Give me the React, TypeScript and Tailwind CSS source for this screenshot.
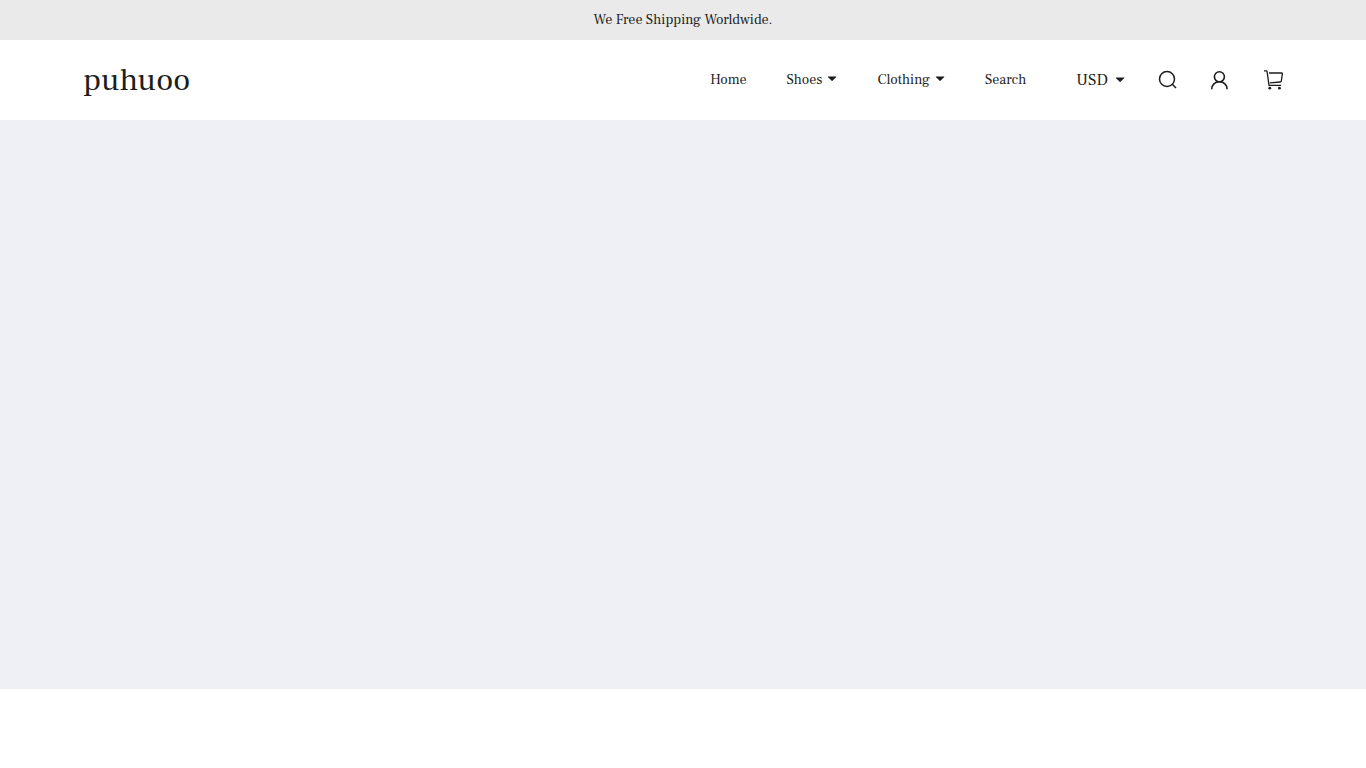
const navItems = [
  { label: "Home", hasMenu: false },
  { label: "Shoes", hasMenu: true },
  { label: "Clothing", hasMenu: true },
  { label: "Search", hasMenu: false },
];

function Caret({ className = "" }: { className?: string }) {
  return (
    <svg viewBox="0 0 10 6" className={`h-1.5 w-2.5 fill-current ${className}`}>
      <path d="M1.1.4H9c.4 0 .5.4.3.7L5.5 4.8a.6.6 0 0 1-.8 0L.8 1.1C.6.8.7.4 1.1.4z" />
    </svg>
  );
}

function SearchIcon() {
  return (
    <svg viewBox="0 0 20 20" className="size-5" fill="none" stroke="currentColor" strokeWidth="1.5">
      <circle cx="9" cy="9" r="7.5" />
      <path d="M14.3 14.3l3.7 3.8" />
    </svg>
  );
}

function UserIcon() {
  return (
    <svg viewBox="0 0 20 20" className="size-5" fill="none" stroke="currentColor" strokeWidth="1.6">
      <circle cx="9.4" cy="6.8" r="5" />
      <path d="M1.7 19.3c0-4.3 3.3-7.5 7.7-7.5s7.7 3.2 7.7 7.5" />
    </svg>
  );
}

function CartIcon() {
  return (
    <svg viewBox="0 0 20 20" className="size-5" fill="none" stroke="currentColor" strokeWidth="1.3" strokeLinejoin="round">
      <path d="M0 .9h2.4c.4 0 .6.3.7.7L5 15.4h12.1" />
      <path d="M5 3h12.7c.5 0 .8.4.7.9l-1.1 7.2c-.1.6-.5.9-1.1.9l-10.4.9" />
      <circle cx="5.8" cy="18.2" r="1.4" fill="currentColor" stroke="none" />
      <circle cx="15.4" cy="18.2" r="1.4" fill="currentColor" stroke="none" />
    </svg>
  );
}

export default function App() {
  return (
    <div className="min-h-screen bg-white font-['Frank_Ruhl_Libre','Noto_Serif',serif] text-[#1c1d1d]">
      {/* announcement */}
      <div className="flex h-10 items-center justify-center bg-[#eaeaea] text-sm">
        We Free Shipping Worldwide.
      </div>

      <header className="flex h-20 items-center justify-between pr-[82px] pl-[83px]">
        <a href="#" className="text-[32px] leading-10">puhuoo</a>

        <div className="flex items-center">
          <nav className="flex items-center gap-10 text-sm">
            {navItems.map((item) => (
              <a key={item.label} href="#" className="flex items-center">
                {item.label}
                {item.hasMenu && <Caret className="mb-0.5 ml-[5px]" />}
              </a>
            ))}
          </nav>
          <button className="ml-[50px] flex items-center text-base">
            USD
            <Caret className="ml-[7px]" />
          </button>
          <button className="ml-[33px]" aria-label="Search">
            <SearchIcon />
          </button>
          <button className="ml-8" aria-label="Account">
            <UserIcon />
          </button>
          <button className="ml-[34px]" aria-label="Cart">
            <CartIcon />
          </button>
        </div>
      </header>

      {/* hero placeholder */}
      <div className="h-[569px] bg-[#eff0f5]"></div>
    </div>
  );
}
